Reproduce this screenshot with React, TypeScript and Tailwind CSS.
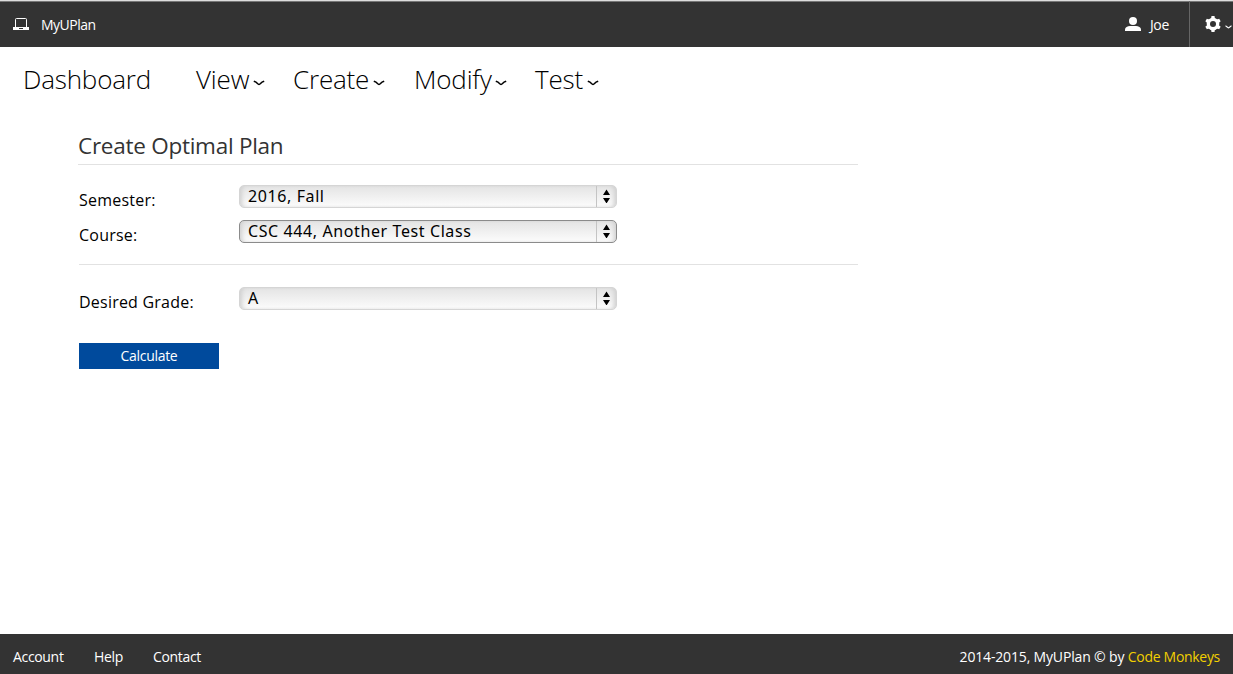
import React from "react";

function Caret({ className }: { className: string }) {
  return (
    <svg viewBox="0 0 12 6" className={className} fill="none" stroke="currentColor" strokeWidth="1.5">
      <path d="M.8 1.200 2.500 1.900C4 2.600 4.800 4.400 6 4.400s2-1.800 3.500-2.500l1.700-.7" />
    </svg>
  );
}

function SmallCaret() {
  return (
    <svg viewBox="0 0 7 4" className="mt-1.5 ml-1 h-1 w-[7px] shrink-0" fill="none" stroke="white" strokeWidth="1.3">
      <path d="M.5.8c1.300.2 1.800 2 3 2s1.700-1.800 3-2" />
    </svg>
  );
}

function Laptop() {
  return (
    <svg viewBox="0 0 16 12" className="h-3 w-4 shrink-0">
      <path d="M2.500 9V1.500q0-1 1-1h9q1 0 1 1V9" fill="none" stroke="white" />
      <path d="M0 9h16v3H0zM6 10v1h4v-1z" fill="white" fillRule="evenodd" />
    </svg>
  );
}

function User() {
  return (
    <svg viewBox="0 0 16 14" className="h-3.5 w-4 shrink-0" fill="white">
      <ellipse cx="8" cy="4" rx="4" ry="4" />
      <path d="M0 14v-1.500C0 10.400 2.500 9.300 5 9.100h6c2.500.2 5 1.300 5 3.400V14z" />
    </svg>
  );
}

function Gear() {
  return (
    <svg viewBox="0 0 16 16" className="size-4 shrink-0">
      <g fill="white">
        <circle cx="8" cy="8" r="6.300" />
        <path id="tooth" d="M6 3 6.500 0h3L10 3v10l-.5 3h-3L6 13z" />
        <use href="#tooth" transform="rotate(60 8 8)" />
        <use href="#tooth" transform="rotate(120 8 8)" />
      </g>
      <circle cx="8" cy="8" r="3" fill="#333333" />
    </svg>
  );
}

function Field({ label, value, active = false }: { label: string; value: string; active?: boolean }) {
  return (
    <div className="flex h-[35px] items-start">
      <span className="w-40 pt-[3px] text-base leading-6 tracking-[0.22px]">{label}</span>
      <button
        className={`flex h-[23px] w-[378px] items-stretch overflow-hidden rounded-[5px] border bg-linear-to-b from-[#e4e4e4] to-[#fcfcfc] text-left shadow-[inset_4px_0_4px_-2px_#d0d0d0,inset_-4px_0_4px_-2px_#d0d0d0] ${active ? "border-[#8b8b8b]" : "border-[#d5d5d5]"}`}
      >
        <span className="flex-1 pl-2 font-['Noto_Sans','Open_Sans',sans-serif] text-base leading-[21px] tracking-[0.6px]">{value}</span>
        <span className="flex w-5 items-start justify-center border-l border-[#c4c4c4] pt-[3px]">
          <svg viewBox="0 0 8 14" className="h-3.5 w-2" fill="black">
            <path d="M0 6 3.500.5 7 6zM0 9h7l-3.500 5.500z" />
          </svg>
        </span>
      </button>
    </div>
  );
}

export default function App() {
  return (
    <div className="flex h-[674px] w-[1233px] flex-col overflow-hidden bg-white font-['Open_Sans','Noto_Sans',sans-serif] text-black">
      <header className="flex h-[47px] shrink-0 border-t border-[#dddddd] bg-[#333333] text-sm text-white shadow-[inset_0_1px_0_#777777]">
        <div className="flex items-center pl-[13px]">
          <Laptop />
          <span className="ml-3 pt-0.5 tracking-[-0.5px]">MyUPlan</span>
        </div>
        <div className="ml-auto flex items-center pr-[19px]">
          <User />
          <span className="ml-[9px] w-5 pt-0.5 tracking-[-0.4px]">Joe</span>
        </div>
        <div className="flex w-11 items-center border-l border-[#666666] pl-[15px]">
          <Gear />
          <SmallCaret />
        </div>
      </header>

      <nav className="flex h-[66px] shrink-0 items-center pb-0.5 pl-[23px] text-[26px] font-light tracking-[-0.18px]">
        <span className="w-[173px]">Dashboard</span>
        <span className="flex w-[97px] items-center">View<Caret className="mt-2 ml-auto mr-7 h-1.5 w-3" /></span>
        <span className="flex w-[121px] items-center">Create<Caret className="mt-2 ml-auto mr-[29px] h-1.5 w-3" /></span>
        <span className="flex w-[121px] items-center">Modify<Caret className="mt-2 ml-auto mr-7 h-1.5 w-3" /></span>
        <span className="flex w-16 items-center">Test<Caret className="mt-2 ml-auto h-1.5 w-3" /></span>
      </nav>

      <main className="ml-[79px] w-[779px] flex-1 pt-[15px]">
        <h1 className="-ml-px h-[37px] border-b border-[#e2e2e2] text-[22.5px] leading-9 tracking-[-0.26px] text-[#333333]">Create Optimal Plan</h1>
        <div className="h-[100px] border-b border-[#e2e2e2] pt-5">
          <Field label="Semester:" value="2016, Fall" />
          <Field label="Course:" value="CSC 444, Another Test Class" active />
        </div>
        <div className="pt-[22px]">
          <Field label="Desired Grade:" value="A" />
        </div>
        <button className="mt-[21px] block h-[26px] w-[140px] bg-[#004a9c] text-sm leading-[26px] tracking-[-0.3px] text-white">Calculate</button>
      </main>

      <footer className="flex h-10 shrink-0 items-center bg-[#333333] px-[13px] pt-1.5 text-sm tracking-[-0.33px] text-white">
        <span className="w-[81px]">Account</span>
        <span className="w-[59px]">Help</span>
        <span>Contact</span>
        <span className="ml-auto tracking-[-0.16px]">2014-2015, MyUPlan © by <span className="tracking-[-0.3px] text-[#f2d000]">Code Monkeys</span></span>
      </footer>
    </div>
  );
}
